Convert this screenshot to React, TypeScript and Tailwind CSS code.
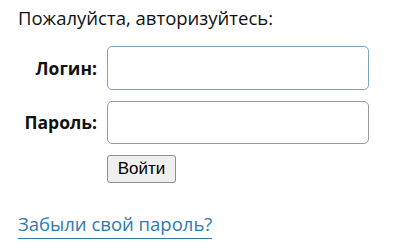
export default function App() {
  return (
    <div className="h-[252px] w-[400px] bg-white pl-[18px] pt-[4px] font-['Open_Sans',sans-serif] text-[#111]">
      <p className="text-[18.5px] leading-[27px]">Пожалуйста, авторизуйтесь:</p>
      <div className="mt-[15px] flex flex-col gap-[11px]">
        <div className="flex items-center">
          <label className="w-[89px] pr-[10px] text-right text-[17.5px] font-bold">Логин:</label>
          <input className="h-[44px] w-[262px] rounded-[5px] border border-[#7aa4bf] bg-white px-2 outline-none" />
        </div>
        <div className="flex items-center">
          <label className="w-[89px] pr-[10px] text-right text-[17.5px] font-bold">Пароль:</label>
          <input type="password" className="h-[43px] w-[262px] rounded-[5px] border border-[#9a9a9a] bg-white px-2 outline-none" />
        </div>
      </div>
      <div className="mt-[11px] pl-[89px]">
        <button className="h-[28px] w-[69px] rounded-[3px] border border-[#8f8f8f] bg-[#efefef] font-['Liberation_Sans',sans-serif] text-[17px] text-black">
          Войти
        </button>
      </div>
      <a href="#" className="mt-[28px] inline-block border-b border-[#2b7bb3] pb-[1px] text-[18.5px] leading-[26px] text-[#2b7bb3]">
        Забыли свой пароль?
      </a>
    </div>
  );
}
